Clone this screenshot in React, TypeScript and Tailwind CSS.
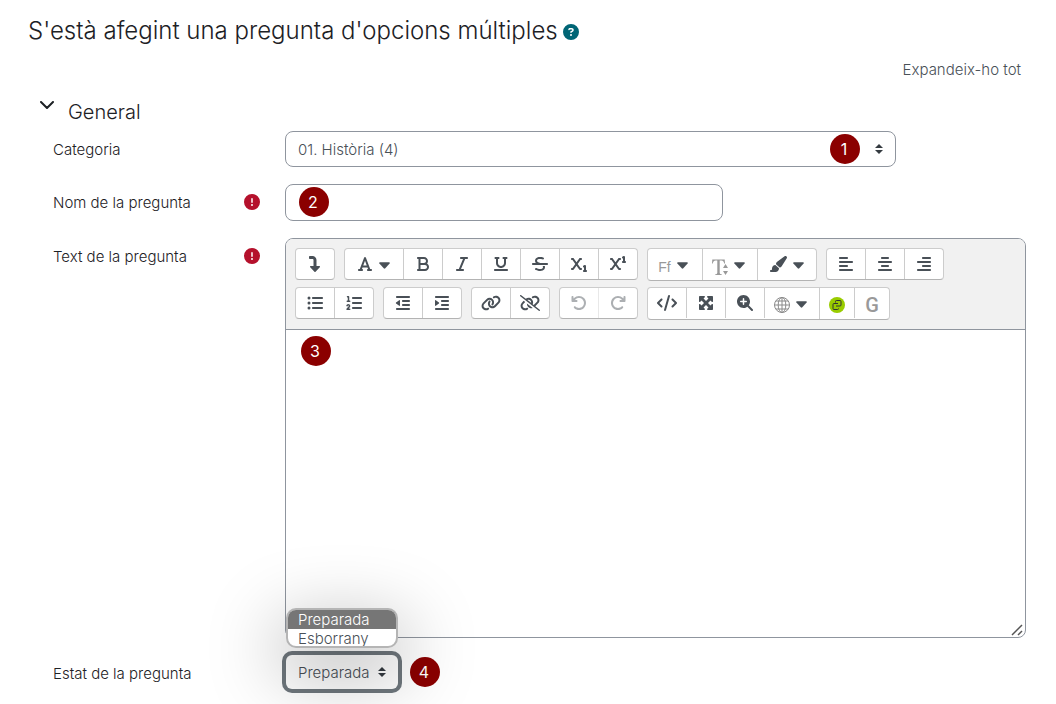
import type { ReactNode } from "react";
import {
  FaAlignCenter,
  FaAlignLeft,
  FaAlignRight,
  FaArrowRotateLeft,
  FaArrowRotateRight,
  FaBold,
  FaCircleExclamation,
  FaCircleQuestion,
  FaCode,
  FaFont,
  FaIndent,
  FaItalic,
  FaLink,
  FaLinkSlash,
  FaListOl,
  FaListUl,
  FaMagnifyingGlassPlus,
  FaMaximize,
  FaOutdent,
  FaPaintbrush,
  FaStrikethrough,
  FaSubscript,
  FaSuperscript,
  FaTurnDown,
  FaUnderline,
} from "react-icons/fa6";

function Marker({ n, className = "" }: { n: number; className?: string }) {
  return (
    <span
      className={`flex size-[30px] items-center justify-center rounded-full bg-[#8b0000] pr-0.5 text-base font-normal text-white ${className}`}
    >
      {n}
    </span>
  );
}

function SortArrows({ className = "" }: { className?: string }) {
  return (
    <svg viewBox="0 0 8 10" className={`pointer-events-none h-2.5 w-2 fill-[#343a40] ${className}`}>
      <path d="M4 0 8 4H0ZM4 10 0 6h8Z" />
    </svg>
  );
}

function Group({ children }: { children: ReactNode }) {
  return (
    <div className="flex divide-x divide-[#ccc] overflow-hidden rounded border border-[#ccc] border-b-[#b3b3b3] bg-white">
      {children}
    </div>
  );
}

function Tool({
  label,
  children,
  menu = false,
  disabled = false,
  narrow = false,
  tall = false,
}: {
  label: string;
  children: ReactNode;
  menu?: boolean;
  disabled?: boolean;
  narrow?: boolean;
  tall?: boolean;
}) {
  const width = menu
    ? tall
      ? "w-[55px] pr-1"
      : "w-[59px] pr-0.5 last:w-[58px]"
    : narrow
      ? "w-[35px] last:w-[34px]"
      : "w-[39px] last:w-[38px]";
  return (
    <button
      type="button"
      aria-label={label}
      disabled={disabled}
      className={`box-border flex items-center justify-center gap-1.5 text-base text-[#495057] disabled:opacity-45 ${
        tall ? "h-[31px]" : "h-[30px]"
      } ${width}`}
    >
      {children}
      {menu && (
        <svg viewBox="0 0 11 7" className="mt-0.5 h-[7px] w-[11px] shrink-0 fill-current">
          <path d="M1 .2h9q1.200.2.600 1.200L6.300 6.300q-.8.7-1.600 0L.4 1.400Q-.2.4 1 .2Z" />
        </svg>
      )}
    </button>
  );
}

function FontSizeIcon() {
  return (
    <svg viewBox="0 0 16 18" className="mt-1 h-[18px] w-4 shrink-0 fill-[#999]">
      <path d="M.3 1.500h12.400l.3 4h-.8Q11.700 2.600 9.500 2.600H7.700V15q0 1.400 2.200 1.500v.6H3.100v-.6Q5.300 16.400 5.300 15V2.600H3.500Q1.300 2.600.8 5.500H0Z" />
      <path d="M13.500 6 16 10h-5ZM13.500 17 11 13h5Z" />
    </svg>
  );
}

function GlobeIcon() {
  return (
    <svg viewBox="0 0 16 16" fill="none" stroke="#8a8a8a" className="mt-0.5 size-4 shrink-0">
      <circle cx="8" cy="8" r="7.500" />
      <ellipse cx="8" cy="8" rx="3.800" ry="7.500" />
      <path d="M8 .5v15M.5 8h15M2 4h12M2 12h12" />
    </svg>
  );
}

function ClipIcon() {
  return (
    <svg viewBox="0 0 16 16" fill="none" className="mt-1 size-4">
      <circle cx="8" cy="8" r="8" fill="#9c0" />
      <path
        d="M6.500 5.500V4.500Q6.500 3.500 7.500 3.500H11Q12 3.500 12 4.500V8Q12 9 11 9H7M9 6.500H5Q4 6.500 4 7.500V11.500Q4 12.500 5 12.500H8.500Q9.500 12.500 9.500 11.500"
        stroke="#333"
      />
    </svg>
  );
}

function Row({
  label,
  htmlFor,
  required = false,
  children,
}: {
  label: string;
  htmlFor: string;
  required?: boolean;
  children: ReactNode;
}) {
  return (
    <div className="flex items-start">
      <div className="flex h-9 w-[232px] shrink-0 items-center justify-between pr-[25px]">
        <label htmlFor={htmlFor} className="pt-0.5">
          {label}
        </label>
        {required && <FaCircleExclamation className="text-base text-[#b5112c]" />}
      </div>
      <div className="min-w-0 flex-1">{children}</div>
    </div>
  );
}

export default function App() {
  return (
    <main className="min-h-screen overflow-clip bg-white pt-[15px] pr-[30px] pb-2 pl-7 font-[Inter,sans-serif] text-[15px] font-light text-[#1d2125]">
      <h2 className="flex items-center gap-[5px] text-2xl leading-8">
        S'està afegint una pregunta d'opcions múltiples
        <button type="button" aria-label="Ajuda" className="pt-0.5 text-base text-[#006575]">
          <FaCircleQuestion />
        </button>
      </h2>

      <div className="mt-[11px] flex justify-end pr-[5px]">
        <a href="#tot" className="leading-6 text-[#495057]">
          Expandeix-ho tot
        </a>
      </div>

      <form>
        <h3 className="mt-3.5 flex h-8 items-center pl-3 text-xl">
          <button type="button" aria-label="Replega General" className="mb-3.5 w-7">
            <svg viewBox="0 0 14 8" className="h-2 w-3.5 fill-none stroke-[#1d2125] stroke-2">
              <path d="M1 1 7 7 13 1" strokeLinecap="round" strokeLinejoin="round" />
            </svg>
          </button>
          General
        </h3>

        <div className="flex flex-col gap-[17px] pt-[3px] pl-[25px]">
          <Row label="Categoria" htmlFor="categoria">
            <div className="relative max-w-[611px]">
              <select
                id="categoria"
                className="h-9 w-full appearance-none rounded-lg border border-[#8f959e] bg-white px-3 pt-0.5 text-[#495057]"
              >
                <option>01. Història (4)</option>
              </select>
              <SortArrows className="absolute top-[13px] right-[13px]" />
              <Marker n={1} className="absolute top-[3px] right-9" />
            </div>
          </Row>

          <Row label="Nom de la pregunta" htmlFor="nom" required>
            <div className="relative max-w-[438px]">
              <input
                id="nom"
                type="text"
                className="block h-[37px] w-full rounded-lg border border-[#8f959e] px-3"
              />
              <Marker n={2} className="absolute top-[3px] left-3.5" />
            </div>
          </Row>

          <Row label="Text de la pregunta" htmlFor="text" required>
            <div className="relative overflow-hidden rounded-lg border border-[#8f959e]">
              <div className="flex flex-wrap items-start gap-x-[9px] gap-y-1.5 border-b border-[#8f959e] bg-[#f1f1f1] p-[9px]">
                <Group>
                  <Tool label="Mostra més botons"><FaTurnDown /></Tool>
                </Group>
                <Group>
                  <Tool label="Estils de paràgraf" menu><FaFont /></Tool>
                  <Tool label="Negreta"><FaBold /></Tool>
                  <Tool label="Cursiva"><FaItalic /></Tool>
                  <Tool label="Subratllat"><FaUnderline /></Tool>
                  <Tool label="Ratllat"><FaStrikethrough /></Tool>
                  <Tool label="Subíndex"><FaSubscript /></Tool>
                  <Tool label="Superíndex"><FaSuperscript /></Tool>
                </Group>
                <Group>
                  <Tool label="Tipus de lletra" menu tall>
                    <span className="pt-1 font-['Liberation_Sans',sans-serif] text-sm text-[#999]">Ff</span>
                  </Tool>
                  <Tool label="Mida de lletra" menu tall><FontSizeIcon /></Tool>
                  <Tool label="Color de lletra" menu><FaPaintbrush className="text-lg" /></Tool>
                </Group>
                <Group>
                  <Tool label="Alinea a l'esquerra"><FaAlignLeft /></Tool>
                  <Tool label="Centra"><FaAlignCenter /></Tool>
                  <Tool label="Alinea a la dreta"><FaAlignRight /></Tool>
                </Group>
                <Group>
                  <Tool label="Llista sense ordenar"><FaListUl /></Tool>
                  <Tool label="Llista ordenada"><FaListOl /></Tool>
                </Group>
                <Group>
                  <Tool label="Redueix el sagnat"><FaOutdent /></Tool>
                  <Tool label="Sagna"><FaIndent /></Tool>
                </Group>
                <Group>
                  <Tool label="Enllaç"><FaLink className="text-xl" /></Tool>
                  <Tool label="Suprimeix l'enllaç"><FaLinkSlash className="text-xl" /></Tool>
                </Group>
                <Group>
                  <Tool label="Desfés" disabled><FaArrowRotateLeft /></Tool>
                  <Tool label="Refés" disabled><FaArrowRotateRight /></Tool>
                </Group>
                <Group>
                  <Tool label="HTML"><FaCode className="text-xl" /></Tool>
                  <Tool label="Pantalla completa"><FaMaximize /></Tool>
                  <Tool label="Amplia"><FaMagnifyingGlassPlus /></Tool>
                  <Tool label="Idioma" menu tall><GlobeIcon /></Tool>
                  <Tool label="Enllaça un recurs" narrow><ClipIcon /></Tool>
                  <Tool label="Google" narrow>
                    <span className="pt-1 font-[Roboto,sans-serif] text-xl font-medium text-[#999]">G</span>
                  </Tool>
                </Group>
              </div>
              <textarea id="text" className="block h-[307px] w-full resize-none p-3 outline-none" />
              <Marker n={3} className="absolute top-[97px] left-[15px]" />
              <svg viewBox="0 0 12 12" className="absolute right-0.5 bottom-px size-3 stroke-[#555] stroke-[1.500]">
                <path d="M1 11 11 1M7 11 11 7" />
              </svg>
            </div>
          </Row>

          <Row label="Estat de la pregunta" htmlFor="estat">
            <div className="flex h-[34px] items-center gap-3 pl-px">
              <div className="relative">
                <select
                  id="estat"
                  className="block h-[34px] w-28 appearance-none rounded-md bg-white px-3 pt-0.5 text-[#495057] ring-4 ring-[#6f777d]"
                >
                  <option>Preparada</option>
                  <option>Esborrany</option>
                </select>
                <SortArrows className="absolute top-3 right-3" />
                <ul
                  role="listbox"
                  aria-label="Estat de la pregunta"
                  className="absolute bottom-[41px] left-0 h-10 w-28 overflow-hidden rounded-[10px] border-2 border-[#b5b5b5] bg-white leading-[19px] shadow-[0_20px_70px_10px_rgba(0,0,0,0.25)]"
                >
                  <li role="option" aria-selected="true" className="bg-[#767676] px-2.5 text-white">
                    Preparada
                  </li>
                  <li role="option" aria-selected="false" className="px-2.5 text-[#495057]">
                    Esborrany
                  </li>
                </ul>
              </div>
              <Marker n={4} />
            </div>
          </Row>
        </div>
      </form>
    </main>
  );
}
